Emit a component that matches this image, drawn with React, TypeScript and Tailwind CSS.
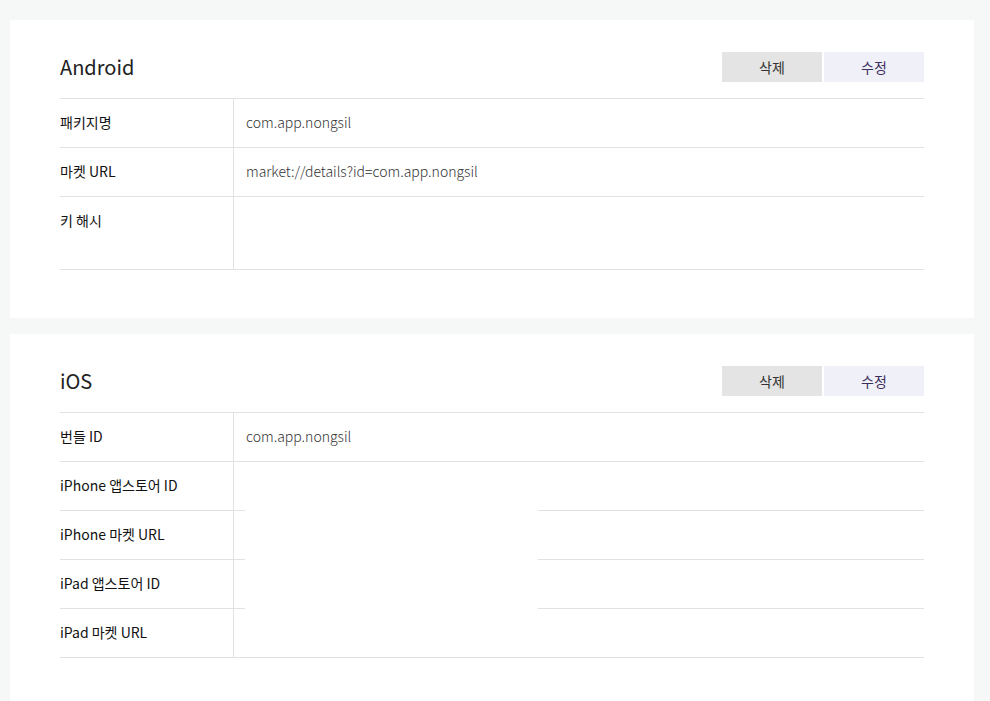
import React from "react"

const font = { fontFamily: '"Noto Sans CJK KR", "Noto Sans", sans-serif' }

interface Row {
  label: string
  value?: string
  tall?: boolean
}

function Section({ title, rows, mask }: { title: string; rows: Row[]; mask?: boolean }) {
  return (
    <div className="bg-white px-[50px] pt-[32px] pb-[48px]">
      <div className="flex items-center justify-between h-[30px] mb-[16px]">
        <h2 className="text-[20px] text-[#222] leading-none -mt-[1px]">{title}</h2>
        <div className="flex gap-[2px]">
          <button className="w-[100px] h-[30px] bg-[#e4e4e4] text-[14px] text-[#333]">삭제</button>
          <button className="w-[100px] h-[30px] bg-[#f0f1f8] text-[14px] text-[#3d2f5c]">수정</button>
        </div>
      </div>
      <div className="relative border-t border-[#e2e2e2]">
        {rows.map((r) => (
          <div key={r.label} className={`flex border-b border-[#e2e2e2] ${r.tall ? "h-[73px]" : "h-[49px]"}`}>
            <div className="w-[174px] shrink-0 border-r border-[#e2e2e2] pt-[13px] text-[14px] font-normal text-[#111]">
              {r.label}
            </div>
            <div className="pl-[12px] pt-[13px] text-[14px] font-light text-[#333]">{r.value}</div>
          </div>
        ))}
        {mask && (
          <div className="absolute left-[185px] top-[97px] w-[293px] h-[147px] bg-white" />
        )}
      </div>
    </div>
  )
}

export default function App() {
  return (
    <div className="min-h-[701px] bg-[#f6f7f7] pt-[20px] pl-[10px] pr-[16px] flex flex-col gap-[16px]" style={font}>
      <Section
        title="Android"
        rows={[
          { label: "패키지명", value: "com.app.nongsil" },
          { label: "마켓 URL", value: "market://details?id=com.app.nongsil" },
          { label: "키 해시", tall: true },
        ]}
      />
      <Section
        title="iOS"
        mask
        rows={[
          { label: "번들 ID", value: "com.app.nongsil" },
          { label: "iPhone 앱스토어 ID" },
          { label: "iPhone 마켓 URL" },
          { label: "iPad 앱스토어 ID" },
          { label: "iPad 마켓 URL" },
        ]}
      />
    </div>
  )
}
